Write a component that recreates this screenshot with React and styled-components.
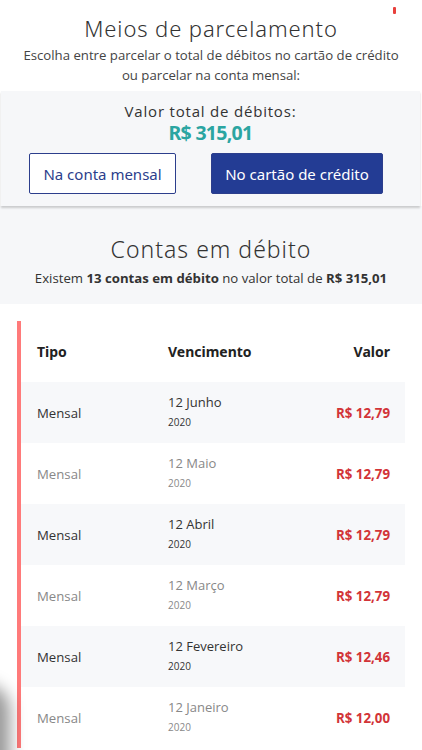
import React from "react";
import styled, { createGlobalStyle } from "styled-components";

const Global = createGlobalStyle`
  html, body { margin: 0; padding: 0; background: #fff; }
  body { font-family: "Open Sans", "Liberation Sans", sans-serif; color: #333; overflow: hidden; }
  * { box-sizing: border-box; }
`;

const Page = styled.div`
  position: relative;
  width: 422px;
  min-height: 750px;
  overflow: hidden;
`;

const Header = styled.header`
  padding-top: 13px;
  text-align: center;
`;

const Title = styled.h1`
  margin: 0;
  font-family: "Noto Sans", "Open Sans", sans-serif;
  font-weight: 300;
  font-size: 22px;
  line-height: 30px;
  letter-spacing: 0.9px;
  color: #333;
`;

const Lead = styled.p`
  margin: 2px 0 0;
  font-size: 13.2px;
  line-height: 20px;
  color: #444;
`;

const TotalCard = styled.section`
  margin: 6px 2px 0 1px;
  background: #f6f7f9;
  padding: 10px 0 12px;
  text-align: center;
  box-shadow: 0 2px 2px rgba(0, 0, 0, 0.18);
  position: relative;
  z-index: 1;
`;

const TotalLabel = styled.div`
  font-size: 15px;
  line-height: 20px;
  letter-spacing: 0.8px;
  color: #333;
`;

const TotalValue = styled.div`
  font-family: "Noto Sans", "Open Sans", sans-serif;
  font-weight: 700;
  font-size: 19.5px;
  line-height: 24px;
  letter-spacing: -0.7px;
  color: #2ba5a1;
`;

const Buttons = styled.div`
  display: flex;
  justify-content: space-between;
  padding: 0 37px 0 28px;
  margin-top: 8px;
`;

const Choice = styled.button`
  height: 41px;
  width: ${(p) => p.w}px;
  border-radius: 2px;
  border: 1px solid #2c3e8c;
  background: ${(p) => (p.active ? "#233c94" : "#fff")};
  color: ${(p) => (p.active ? "#fff" : "#2c3e8c")};
  font-family: "Noto Sans", "Open Sans", sans-serif;
  font-size: 15px;
  font-weight: 400;
  padding: 0;
  cursor: pointer;
`;

const DebtSection = styled.section`
  background: #f6f7f9;
  padding: 28px 0 16px;
  text-align: center;
`;

const SectionTitle = styled.h2`
  margin: 0;
  font-family: "Noto Sans", "Open Sans", sans-serif;
  font-weight: 300;
  font-size: 23px;
  line-height: 30px;
  letter-spacing: 1px;
  color: #333;
`;

const SectionLead = styled.p`
  margin: 4px 0 0;
  font-size: 13.2px;
  line-height: 20px;
  color: #333;
  b { font-weight: 700; }
`;

const Table = styled.div`
  margin: 17px 17px 0 17px;
  border-left: 4px solid #ff7a7a;
`;

const Row = styled.div`
  display: grid;
  grid-template-columns: 131px 1fr auto;
  align-items: center;
  height: 61px;
  padding: 0 15px 0 16px;
  background: ${(p) => (p.shaded ? "#f7f8fa" : "#fff")};
  color: ${(p) => (p.shaded ? "#333" : "#888")};
`;

const HeadCell = styled.div`
  font-family: "Noto Sans", "Open Sans", sans-serif;
  font-weight: 700;
  font-size: 14px;
  color: #222;
  text-align: ${(p) => (p.right ? "right" : "left")};
`;

const Cell = styled.div`
  font-size: 13.2px;
  line-height: 20px;
`;

const DateCell = styled.div`
  display: flex;
  flex-direction: column;
  margin-top: -3px;
`;

const Month = styled.span`
  font-size: 13px;
  line-height: 20px;
`;

const Year = styled.span`
  font-size: 10px;
  line-height: 16px;
  margin-top: 2px;
`;

const Amount = styled.div`
  font-size: 13.3px;
  font-weight: 700;
  color: #d23438;
  text-align: right;
`;

const Marker = styled.span`
  position: absolute;
  top: 7px;
  left: 393px;
  width: 3px;
  height: 7px;
  background: #e8403c;
  border-radius: 1px;
`;

const EdgeShadow = styled.div`
  position: absolute;
  left: -40px;
  top: 690px;
  width: 40px;
  height: 110px;
  border-radius: 20px;
  box-shadow: 4px 0 16px 6px rgba(0, 0, 0, 0.4);
  pointer-events: none;
`;

const rows = [
  ["Junho", "R$ 12,79"],
  ["Maio", "R$ 12,79"],
  ["Abril", "R$ 12,79"],
  ["Março", "R$ 12,79"],
  ["Fevereiro", "R$ 12,46"],
  ["Janeiro", "R$ 12,00"],
];

export default function App() {
  return (
    <Page>
      <Global />
      <Marker />
      <Header>
        <Title>Meios de parcelamento</Title>
        <Lead>
          Escolha entre parcelar o total de débitos no cartão de crédito
          <br />
          ou parcelar na conta mensal:
        </Lead>
      </Header>
      <TotalCard>
        <TotalLabel>Valor total de débitos:</TotalLabel>
        <TotalValue>R$ 315,01</TotalValue>
        <Buttons>
          <Choice w={147}>Na conta mensal</Choice>
          <Choice w={172} active>
            No cartão de crédito
          </Choice>
        </Buttons>
      </TotalCard>
      <DebtSection>
        <SectionTitle>Contas em débito</SectionTitle>
        <SectionLead>
          Existem <b>13 contas em débito</b> no valor total de <b>R$ 315,01</b>
        </SectionLead>
      </DebtSection>
      <Table>
        <Row>
          <HeadCell>Tipo</HeadCell>
          <HeadCell>Vencimento</HeadCell>
          <HeadCell right>Valor</HeadCell>
        </Row>
        {rows.map(([m, v], i) => (
          <Row key={m} shaded={i % 2 === 0}>
            <Cell>Mensal</Cell>
            <DateCell>
              <Month>12 {m}</Month>
              <Year>2020</Year>
            </DateCell>
            <Amount>{v}</Amount>
          </Row>
        ))}
      </Table>
      <EdgeShadow />
    </Page>
  );
}
